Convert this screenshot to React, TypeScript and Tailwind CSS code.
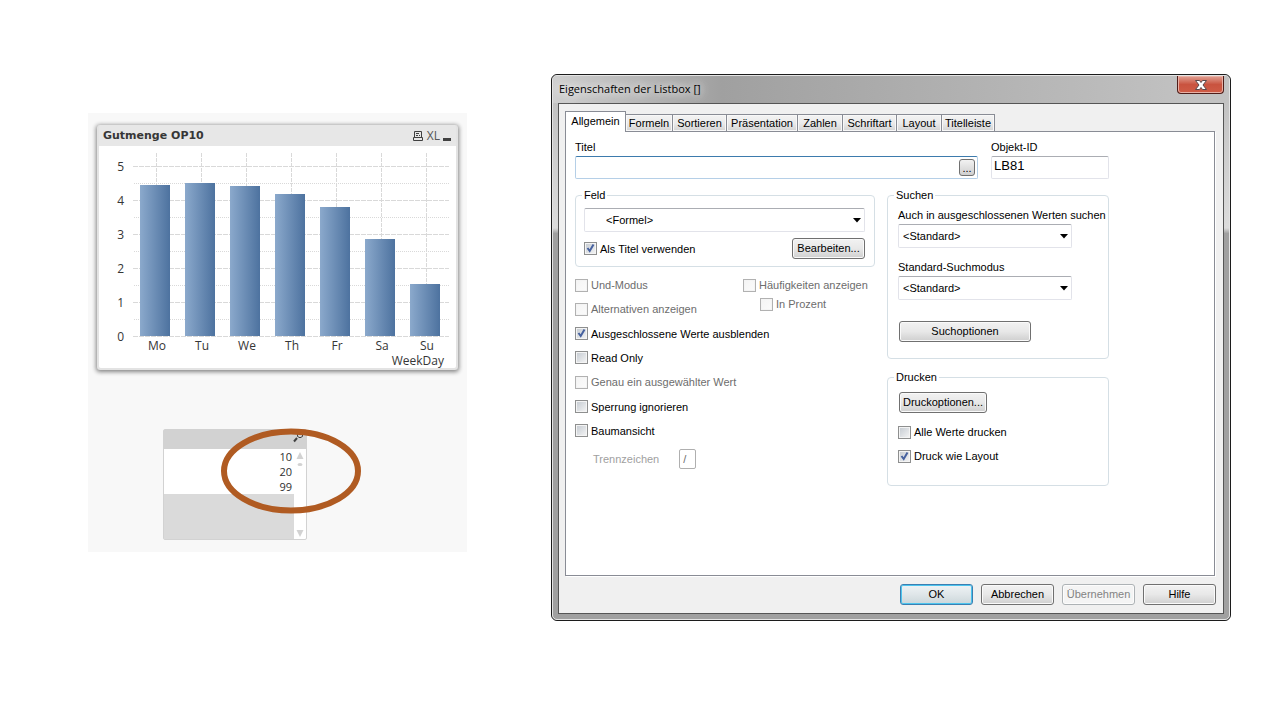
import { useId, type ReactNode } from "react";

const days = [
  { day: "Mo", value: 4.45 },
  { day: "Tu", value: 4.51 },
  { day: "We", value: 4.42 },
  { day: "Th", value: 4.18 },
  { day: "Fr", value: 3.8 },
  { day: "Sa", value: 2.86 },
  { day: "Su", value: 1.53 },
];

const UNIT = 34;
const BASE = 190;

function BarChart() {
  return (
    <svg
      viewBox="0 0 357 222"
      className="block w-full rounded-b-xs bg-white font-['Open_Sans','Noto_Sans',sans-serif] text-[12px]"
      role="img"
      aria-label="Gutmenge OP10"
    >
      <defs>
        <linearGradient id="bar" x1="0" x2="1" y1="0" y2="0">
          <stop offset="0" stopColor="#8ba9cc" />
          <stop offset="1" stopColor="#4d729f" />
        </linearGradient>
      </defs>
      {[0, 1, 2, 3, 4, 5].map((n) => (
        <g key={n}>
          <line x1="34" x2="350" y1={BASE + 0.5 - n * UNIT} y2={BASE + 0.5 - n * UNIT} stroke="#d9d9d9" strokeDasharray="5 1" />
          {n < 5 && (
            <line x1="35" x2="350" y1={BASE + 0.5 - n * UNIT - 17} y2={BASE + 0.5 - n * UNIT - 17} stroke="#d9d9d9" strokeDasharray="1 1" />
          )}
          <text x="25" y={BASE + 5 - n * UNIT} textAnchor="end" fill="#363636">
            {n}
          </text>
        </g>
      ))}
      {days.map(({ day, value }, i) => {
        const top = Math.round(BASE - value * UNIT);
        return (
          <g key={day}>
            <line x1={57.5 + i * 45} x2={57.5 + i * 45} y1="7" y2={top} stroke="#d9d9d9" strokeDasharray="4 1" />
            <rect x={41 + i * 45} y={top} width="30" height={BASE - top} fill="url(#bar)" />
            <text x={58 + i * 45} y="204" textAnchor="middle" fill="#363636">
              {day}
            </text>
          </g>
        );
      })}
      <text x="345" y="219" textAnchor="end" fill="#363636">
        WeekDay
      </text>
    </svg>
  );
}

function ChartCard() {
  return (
    <section className="rounded-[3px] border-x-2 border-b-2 border-[#e3e3e3] bg-[#e7e7e7] shadow-[0_1px_4px_1px_#858585]">
      <header className="flex h-[21px] items-center justify-between pr-1 pl-1">
        <h2 className="font-['DejaVu_Sans',sans-serif] text-[11px] leading-4 font-bold whitespace-nowrap text-[#363636]">
          Gutmenge OP10
        </h2>
        <div className="flex items-center gap-[3px]">
          <button type="button" aria-label="Drucken">
            <svg width="12" height="12" viewBox="0 0 12 12" fill="none" stroke="#404040">
              <path d="M2.5 7.5v-6h7v6M1.5 7.5h9v3h-9zM4 3.5h3M4 5.5h2M7 5.5h1" />
            </svg>
          </button>
          <button type="button" aria-label="Excel" className="font-['Open_Sans',sans-serif] text-[12px] leading-4 text-[#555]">
            XL
          </button>
          <button type="button" aria-label="Minimieren">
            <svg width="9" height="12" viewBox="0 0 9 12">
              <path d="M0 8h8v3H0z" fill="#404040" />
            </svg>
          </button>
        </div>
      </header>
      <BarChart />
    </section>
  );
}

function ListBox() {
  return (
    <section className="relative mt-[59px] ml-[66px] w-[144px] rounded-xs border border-[#d2d2d2] bg-white">
      <header className="flex h-[19px] items-start justify-end bg-[#d2d2d2] pr-[2px]">
        <button type="button" aria-label="Suchen">
          <svg width="11" height="14" viewBox="0 0 11 14" fill="none" stroke="#404040">
            <path d="M4.5 2.5q2.5 2 5 0v4q-2.5 2.5-5 0z" />
            <path d="M4 8L1 11.5" strokeWidth="2" />
          </svg>
        </button>
      </header>
      <div className="flex">
        <div className="flex grow flex-col">
          <ul className="text-right font-['Open_Sans','Noto_Sans',sans-serif] text-[11px] leading-[15px] text-[#303030]">
            <li className="pr-[2px]">10</li>
            <li className="pr-[2px]">20</li>
            <li className="pr-[2px]">99</li>
          </ul>
          <div className="h-[45px] bg-[#dadada]" />
        </div>
        <div className="flex w-3 flex-col items-center justify-between">
          <svg width="8" height="18" viewBox="0 0 8 18" className="mt-[2px]" fill="#d2d2d2">
            <path d="M4 1l3.5 7h-7z" />
            <ellipse cx="4" cy="13.5" rx="2.5" ry="1.5" />
          </svg>
          <svg width="8" height="9" viewBox="0 0 8 9" className="mb-px" fill="#d2d2d2">
            <path d="M4 8l3.5-7h-7z" />
          </svg>
        </div>
      </div>
      <svg width="140" height="86" viewBox="0 0 140 86" className="pointer-events-none absolute top-[-2px] left-[57px]">
        <ellipse cx="70" cy="43" rx="67" ry="39.5" fill="none" stroke="#b05b22" strokeWidth="6" />
      </svg>
    </section>
  );
}

function Check({ label, checked, disabled }: { label: string; checked?: boolean; disabled?: boolean }) {
  return (
    <label className={`flex w-max items-center gap-[3px] leading-[14px] ${disabled ? "text-[#6d6d6d]" : ""}`}>
      <span className="grid size-[13px]">
        <input
          type="checkbox"
          defaultChecked={checked}
          disabled={disabled}
          className="peer col-start-1 row-start-1 size-[13px] appearance-none border border-[#8e8f8f] bg-linear-to-br from-[#c3c9d0] to-[#f6f6f6] shadow-[inset_0_0_0_1px_#f4f4f4] disabled:border-[#b1b1b1] disabled:from-[#f4f4f4] disabled:to-[#fbfbfb]"
        />
        <svg viewBox="0 0 13 13" className="pointer-events-none col-start-1 row-start-1 hidden size-[13px] peer-checked:block" fill="none" stroke="#46619f" strokeWidth="2">
          <path d="M3.5 6L5.700 9L9.5 2.5" />
        </svg>
      </span>
      {label}
    </label>
  );
}

function Button({ children, className = "", primary, disabled }: { children: ReactNode; className?: string; primary?: boolean; disabled?: boolean }) {
  const tone = primary
    ? "border-[#3c7fb1] from-[#eef3f5] via-[#dfe6e9] to-[#cbd6da] shadow-[inset_0_0_0_1px_#4cc4ee]"
    : disabled
      ? "border-[#adb2b5] from-[#f4f4f4] via-[#f4f4f4] to-[#f4f4f4] text-[#838383] shadow-[inset_0_0_0_1px_#fcfcfc]"
      : "border-[#707070] from-[#f2f2f2] via-[#e8e8e8] to-[#cfcfcf] shadow-[inset_0_0_0_1px_#fafafa]";
  return (
    <button
      type="button"
      disabled={disabled}
      className={`flex h-[21px] items-center justify-center rounded-[3px] border bg-linear-to-b whitespace-nowrap ${tone} ${className}`}
    >
      {children}
    </button>
  );
}

function Select({ value, label, className = "" }: { value: string; label: string; className?: string }) {
  return (
    <div className="grid">
      <select
        aria-label={label}
        className={`col-start-1 row-start-1 h-6 w-full appearance-none rounded-xs border border-[#e2e3ea] border-t-[#abadb3] bg-white ${className}`}
      >
        <option>{value}</option>
      </select>
      <svg width="8" height="5" viewBox="0 0 8 5" className="pointer-events-none col-start-1 row-start-1 mr-1 self-center justify-self-end">
        <path d="M0 0h8L4 4.5z" />
      </svg>
    </div>
  );
}

function Group({ title, className = "", children }: { title: string; className?: string; children: ReactNode }) {
  return (
    <fieldset className={`min-w-0 rounded-[4px] border border-[#d5dfe5] px-[10px] ${className}`}>
      <legend className="-ml-[4px] px-[2px] leading-[14px]">{title}</legend>
      {children}
    </fieldset>
  );
}

const tabs = [
  { name: "Formeln", width: "w-[47px]" },
  { name: "Sortieren", width: "w-[54px]" },
  { name: "Präsentation", width: "w-[71px]" },
  { name: "Zahlen", width: "w-[45px]" },
  { name: "Schriftart", width: "w-[54px]" },
  { name: "Layout", width: "w-[45px]" },
  { name: "Titelleiste", width: "w-[53px]" },
];

function Form() {
  const title = useId();
  const objectId = useId();
  const separator = useId();
  return (
    <form className="min-h-[445px] border border-[#898c95] bg-white pt-2 pr-[105px] pl-[9px] shadow-[1px_1px_0_#fff]">
      <div className="flex gap-[13px]">
        <div className="flex grow flex-col gap-[2px]">
          <label htmlFor={title} className="leading-[14px]">
            Titel
          </label>
          <div className="flex h-[23px] items-center rounded-xs border border-[#b5cfe7] border-t-[#3d7bad] pr-[2px]">
            <input id={title} type="text" className="h-full min-w-0 grow px-1 outline-none" />
            <button
              type="button"
              aria-label="Titel bearbeiten"
              className="flex h-[17px] w-4 items-end justify-center rounded-[3px] border border-[#707070] bg-linear-to-b from-[#f2f2f2] to-[#cfcfcf] leading-[14px]"
            >
              ...
            </button>
          </div>
        </div>
        <div className="flex w-[118px] flex-col gap-[2px]">
          <label htmlFor={objectId} className="leading-[14px]">
            Objekt-ID
          </label>
          <input
            id={objectId}
            type="text"
            defaultValue="LB81"
            className="h-[23px] rounded-xs border border-[#e2e3ea] border-t-[#abadb3] px-[2px] pb-1 text-[13px]"
          />
        </div>
      </div>
      <div className="mt-[9px] grid grid-cols-[300fr_222fr] gap-3">
        <div className="min-w-0">
          <Group title="Feld" className="pb-[7px]">
            <div className="-mr-px -ml-[2px] mt-[6px]">
              <Select value="<Formel>" label="Feld" className="pl-[21px]" />
              <div className="mt-[6px] flex items-center justify-between">
                <Check label="Als Titel verwenden" checked />
                <Button className="w-[73px]">Bearbeiten...</Button>
              </div>
            </div>
          </Group>
          <div className="mt-[6px] flex">
            <div className="grid h-[170px] w-[168px] auto-rows-fr items-center">
              <Check label="Und-Modus" disabled />
              <Check label="Alternativen anzeigen" disabled />
              <Check label="Ausgeschlossene Werte ausblenden" checked />
              <Check label="Read Only" />
              <Check label="Genau ein ausgewählter Wert" disabled />
              <Check label="Sperrung ignorieren" />
              <Check label="Baumansicht" />
            </div>
            <div className="flex flex-col gap-[5px] pt-[5px]">
              <Check label="Häufigkeiten anzeigen" disabled />
              <div className="pl-[17px]">
                <Check label="In Prozent" disabled />
              </div>
            </div>
          </div>
          <div className="mt-[6px] flex items-center gap-5 pl-[18px] text-[#a0a0a0]">
            <label htmlFor={separator}>Trennzeichen</label>
            <input
              id={separator}
              type="text"
              defaultValue="/"
              disabled
              className="h-5 w-[17px] rounded-xs border border-[#afafaf] px-[3px] text-[#6d6d6d]"
            />
          </div>
        </div>
        <div className="min-w-0">
          <Group title="Suchen" className="pb-4">
            <p className="mt-[6px] leading-[14px] whitespace-nowrap">Auch in ausgeschlossenen Werten suchen</p>
            <div className="mt-[2px] w-[174px]">
              <Select value="<Standard>" label="Auch in ausgeschlossenen Werten suchen" className="pl-1" />
            </div>
            <p className="mt-3 leading-[14px]">Standard-Suchmodus</p>
            <div className="mt-[2px] w-[174px]">
              <Select value="<Standard>" label="Standard-Suchmodus" className="pl-1" />
            </div>
            <Button className="mt-[21px] ml-px w-[132px]">Suchoptionen</Button>
          </Group>
          <Group title="Drucken" className="mt-[11px] pb-[22px]">
            <Button className="mt-2 ml-px w-[88px]">Druckoptionen...</Button>
            <div className="mt-3 flex flex-col gap-[10px]">
              <Check label="Alle Werte drucken" />
              <Check label="Druck wie Layout" checked />
            </div>
          </Group>
        </div>
      </div>
    </form>
  );
}

function PropertiesDialog() {
  return (
    <section
      role="dialog"
      aria-label="Eigenschaften der Listbox []"
      className="rounded-[6px] border border-[#1c1c1c] bg-[#a0a0a0] font-['Liberation_Sans',Arial,sans-serif] text-[11px] text-black"
    >
      <div className="rounded-[5px] border border-[#e4e4e4] bg-linear-to-b from-[#bdbdbd] from-0% via-[#dcdcdc] via-28% to-[#a0a0a0] to-29% px-[5px] pb-[5px]">
        <header className="-mx-[5px] flex h-[27px] items-start justify-between rounded-t-[4px] bg-linear-to-r from-[#cfcfcf] from-0% via-[#a0a0a0] via-25% to-[#c2c2c2] to-95% pr-[5px] pl-[6px]">
          <h1 className="pt-1 pr-2 font-['Open_Sans','Noto_Sans',sans-serif] text-[11px] leading-[18px] whitespace-nowrap [text-shadow:0_0_8px_#fff,0_0_12px_#fff]">
            Eigenschaften der Listbox []
          </h1>
          <button
            type="button"
            aria-label="Schließen"
            className="flex h-[18px] w-[47px] items-center justify-center rounded-b-[4px] border border-t-0 border-[#4f1d19] bg-linear-to-b from-[#e0a195] from-0% via-[#c9533f] via-50% to-[#cf5c46] shadow-[inset_0_0_0_1px_#e9b0a5]"
          >
            <svg width="12" height="10" viewBox="0 0 12 10">
              <path d="M.5.5h4L6 2.5 7.5.5h4L8 5l3.5 4.5h-4L6 7.5 4.5 9.5h-4L4 5z" fill="#fff" stroke="#5a4a4c" />
            </svg>
          </button>
        </header>
        <div className="border border-[#555] bg-[#f0f0f0] pt-[7px] pr-2 pb-2 pl-[6px]">
          <div role="tablist" className="-mb-px flex items-end">
            <button type="button" role="tab" aria-selected="true" className="relative h-[21px] w-[61px] border border-b-0 border-[#898c95] bg-white pb-px">
              Allgemein
            </button>
            {tabs.map(({ name, width }) => (
              <button
                key={name}
                type="button"
                role="tab"
                aria-selected="false"
                className={`mb-px h-[17px] border-t border-r border-[#898c95] bg-linear-to-b from-[#f3f3f3] via-[#ebebeb] to-[#d3d3d3] whitespace-nowrap shadow-[inset_0_0_0_1px_#f8f8f8] ${width}`}
              >
                {name}
              </button>
            ))}
          </div>
          <Form />
          <footer className="mt-2 -mr-px flex justify-end gap-2">
            <Button primary className="w-[73px]">OK</Button>
            <Button className="w-[73px]">Abbrechen</Button>
            <Button className="w-[73px]" disabled>Übernehmen</Button>
            <Button className="w-[73px]">Hilfe</Button>
          </footer>
        </div>
      </div>
    </section>
  );
}

export default function App() {
  return (
    <main className="grid min-h-screen grid-cols-[379fr_680fr] items-start gap-[84px] bg-white pt-[74px] pr-[49px] pl-[88px]">
      <div className="mt-[39px] min-w-0 bg-[#f8f8f8] pt-3 pr-[9px] pb-3 pl-[9px]">
        <ChartCard />
        <ListBox />
      </div>
      <PropertiesDialog />
    </main>
  );
}
